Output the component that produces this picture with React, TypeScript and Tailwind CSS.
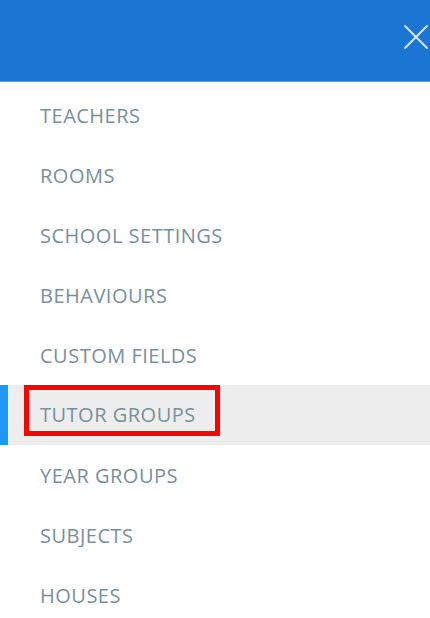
import { X } from "lucide-react";

const items = [
  "TEACHERS",
  "ROOMS",
  "SCHOOL SETTINGS",
  "BEHAVIOURS",
  "CUSTOM FIELDS",
  "TUTOR GROUPS",
  "YEAR GROUPS",
  "SUBJECTS",
  "HOUSES",
];

const active = "TUTOR GROUPS";

const App = () => {
  return (
    <div
      className="w-[430px] h-[618px] overflow-hidden bg-white"
      style={{ fontFamily: '"Open Sans", sans-serif' }}
    >
      {/* Header */}
      <div className="h-[82px] bg-[#1a76d2] border-b border-[#5c9ee0] flex justify-end items-start overflow-hidden">
        <X className="w-[44px] h-[44px] mt-[15px] -mr-[8px] text-[#d8e7f7]" strokeWidth={1} />
      </div>

      {/* Menu */}
      <nav className="pt-[3px]">
        {items.map((item) => {
          const isActive = item === active;
          return isActive ? (
            <div
              key={item}
              className="h-[60px] flex items-start bg-[#ededed] border-l-[8px] border-[#2196f3] pl-[16px]"
            >
              <span className="h-[51px] pt-[11px] pl-[11px] pr-[19px] border-[5px] border-[#ff0000] text-[20px] leading-[28px] tracking-[0.5px] text-[#78909c]">
                {item}
              </span>
            </div>
          ) : (
            <div key={item} className="h-[60px] pt-[17px] pl-[40px]">
              <span className="text-[20px] leading-[28px] tracking-[0.5px] text-[#78909c]">{item}</span>
            </div>
          );
        })}
      </nav>
    </div>
  );
};

export default App;
